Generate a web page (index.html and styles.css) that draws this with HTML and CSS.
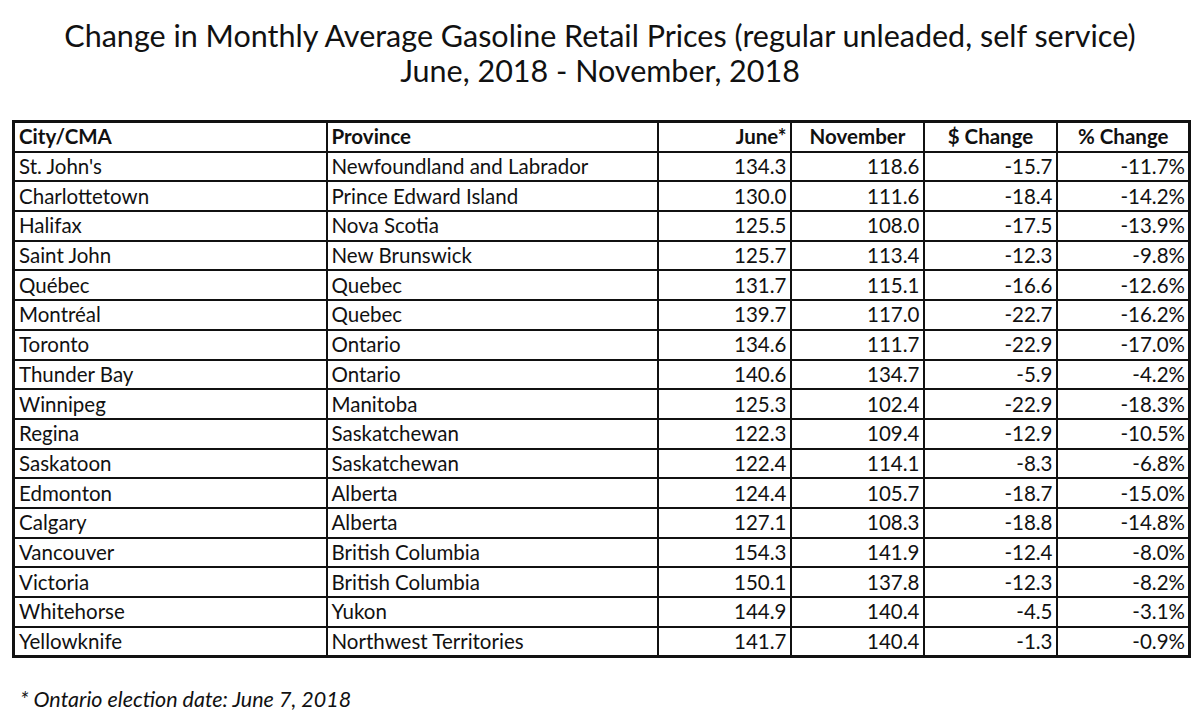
FILE: index.html
```html
<!DOCTYPE html>
<html lang="en">
<head>
<meta charset="utf-8">
<title>Change in Monthly Average Gasoline Retail Prices</title>
<link rel="stylesheet" href="styles.css">
</head>
<body>
<div class="page">
  <h1 class="title">
    <span class="title-line">Change in Monthly Average Gasoline Retail Prices (regular unleaded, self service)</span>
    <span class="title-line">June, 2018 - November, 2018</span>
  </h1>
  <table class="prices">
    <colgroup>
      <col class="c-city"><col class="c-prov"><col class="c-num"><col class="c-num"><col class="c-num"><col class="c-num">
    </colgroup>
    <thead>
      <tr><th class="l">City/CMA</th><th class="l">Province</th><th class="r">June*</th><th class="c">November</th><th class="c">$ Change</th><th class="c">% Change</th></tr>
    </thead>
    <tbody>
      <tr><td>St. John's</td><td>Newfoundland and Labrador</td><td class="r">134.3</td><td class="r">118.6</td><td class="r">-15.7</td><td class="r">-11.7%</td></tr>
      <tr><td>Charlottetown</td><td>Prince Edward Island</td><td class="r">130.0</td><td class="r">111.6</td><td class="r">-18.4</td><td class="r">-14.2%</td></tr>
      <tr><td>Halifax</td><td>Nova Scotia</td><td class="r">125.5</td><td class="r">108.0</td><td class="r">-17.5</td><td class="r">-13.9%</td></tr>
      <tr><td>Saint John</td><td>New Brunswick</td><td class="r">125.7</td><td class="r">113.4</td><td class="r">-12.3</td><td class="r">-9.8%</td></tr>
      <tr><td>Québec</td><td>Quebec</td><td class="r">131.7</td><td class="r">115.1</td><td class="r">-16.6</td><td class="r">-12.6%</td></tr>
      <tr><td>Montréal</td><td>Quebec</td><td class="r">139.7</td><td class="r">117.0</td><td class="r">-22.7</td><td class="r">-16.2%</td></tr>
      <tr><td>Toronto</td><td>Ontario</td><td class="r">134.6</td><td class="r">111.7</td><td class="r">-22.9</td><td class="r">-17.0%</td></tr>
      <tr><td>Thunder Bay</td><td>Ontario</td><td class="r">140.6</td><td class="r">134.7</td><td class="r">-5.9</td><td class="r">-4.2%</td></tr>
      <tr><td>Winnipeg</td><td>Manitoba</td><td class="r">125.3</td><td class="r">102.4</td><td class="r">-22.9</td><td class="r">-18.3%</td></tr>
      <tr><td>Regina</td><td>Saskatchewan</td><td class="r">122.3</td><td class="r">109.4</td><td class="r">-12.9</td><td class="r">-10.5%</td></tr>
      <tr><td>Saskatoon</td><td>Saskatchewan</td><td class="r">122.4</td><td class="r">114.1</td><td class="r">-8.3</td><td class="r">-6.8%</td></tr>
      <tr><td>Edmonton</td><td>Alberta</td><td class="r">124.4</td><td class="r">105.7</td><td class="r">-18.7</td><td class="r">-15.0%</td></tr>
      <tr><td>Calgary</td><td>Alberta</td><td class="r">127.1</td><td class="r">108.3</td><td class="r">-18.8</td><td class="r">-14.8%</td></tr>
      <tr><td>Vancouver</td><td>British Columbia</td><td class="r">154.3</td><td class="r">141.9</td><td class="r">-12.4</td><td class="r">-8.0%</td></tr>
      <tr><td>Victoria</td><td>British Columbia</td><td class="r">150.1</td><td class="r">137.8</td><td class="r">-12.3</td><td class="r">-8.2%</td></tr>
      <tr><td>Whitehorse</td><td>Yukon</td><td class="r">144.9</td><td class="r">140.4</td><td class="r">-4.5</td><td class="r">-3.1%</td></tr>
      <tr><td>Yellowknife</td><td>Northwest Territories</td><td class="r">141.7</td><td class="r">140.4</td><td class="r">-1.3</td><td class="r">-0.9%</td></tr>
    </tbody>
  </table>
  <p class="note">* Ontario election date: June 7, 2018</p>
</div>
</body>
</html>
```

FILE: styles.css
```css
html, body {
  margin: 0;
  padding: 0;
  background: #ffffff;
}

body {
  font-family: Lato, "Open Sans", "Liberation Sans", sans-serif;
  color: #111111;
}

.page {
  width: 1200px;
  height: 724px;
  overflow: hidden;
}

.title {
  margin: 18px 0 0 0;
  font-weight: 400;
  font-size: 30.5px;
  line-height: 35px;
  text-align: center;
  display: flex;
  flex-direction: column;
}

.title-line {
  display: block;
}

.prices {
  margin: 32px 0 0 12px;
  width: 1176px;
  border-collapse: collapse;
  table-layout: fixed;
  border: 3px solid #111111;
  font-size: 20.5px;
}

.c-city { width: 313px; }
.c-prov { width: 331px; }
.c-num { width: 133px; }

.prices th,
.prices td {
  border: 2px solid #111111;
  height: 27.7px;
  padding: 0 3px 0 4px;
  line-height: 27px;
  white-space: nowrap;
  overflow: hidden;
}

.prices th {
  font-weight: 700;
}

.prices .l { text-align: left; }
.prices .r { text-align: right; }
.prices .c { text-align: center; }

.note {
  margin: 29px 0 0 20px;
  font-style: italic;
  font-size: 21.5px;
  line-height: 24px;
}
```
